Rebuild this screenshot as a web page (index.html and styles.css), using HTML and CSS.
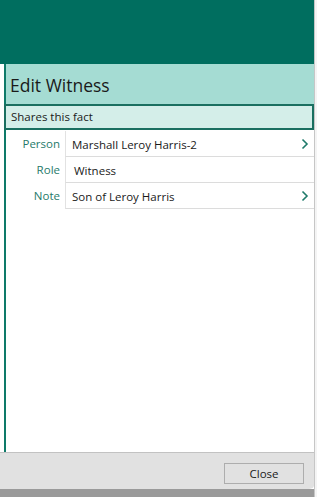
FILE: index.html
```html
<!DOCTYPE html>
<html lang="en">
<head>
    <meta charset="UTF-8">
    <meta name="viewport" content="width=device-width, initial-scale=1.0">
    <title>Edit Witness</title>
    <link rel="stylesheet" href="styles.css">
</head>
<body>
    <div class="screen">
        <div class="window">
            <div class="topbar"></div>

            <div class="dialog">
                <div class="dialog-title">Edit Witness</div>
                <div class="section">Shares this fact</div>

                <div class="fields">
                    <div class="field">
                        <div class="label">Person</div>
                        <div class="value">
                            <span>Marshall Leroy Harris-2</span>
                            <svg class="chevron" viewBox="0 0 8 12" width="8" height="12">
                                <path d="M1.5 1.5 L6 6 L1.5 10.5" fill="none" stroke="#1f7a6a" stroke-width="1.6"/>
                            </svg>
                        </div>
                    </div>
                    <div class="field">
                        <div class="label">Role</div>
                        <div class="value plain">
                            <span>Witness</span>
                        </div>
                    </div>
                    <div class="field">
                        <div class="label">Note</div>
                        <div class="value">
                            <span>Son of Leroy Harris</span>
                            <svg class="chevron" viewBox="0 0 8 12" width="8" height="12">
                                <path d="M1.5 1.5 L6 6 L1.5 10.5" fill="none" stroke="#1f7a6a" stroke-width="1.6"/>
                            </svg>
                        </div>
                    </div>
                </div>
            </div>

            <div class="footer">
                <button class="btn">Close</button>
            </div>
        </div>
        <div class="edge"></div>
    </div>
</body>
</html>
```

FILE: styles.css
```css
* {
    margin: 0;
    padding: 0;
    box-sizing: border-box;
}

body {
    font-family: "Open Sans", "Noto Sans", Arial, sans-serif;
    background-color: #ffffff;
    color: #1a1a1a;
    width: 317px;
    height: 497px;
    overflow: hidden;
}

.screen {
    display: flex;
    height: 497px;
    background: linear-gradient(to bottom, #ffffff 0, #ffffff 489px, #9a9a9a 489px);
}

.window {
    width: 314px;
    display: flex;
    flex-direction: column;
}

.edge {
    width: 3px;
    border-left: 1px solid #c6c6c6;
    background-color: #f4f4f4;
}

.topbar {
    height: 64px;
    background-color: #006e5f;
}

.dialog {
    height: 388px;
    margin-left: 4px;
    border-left: 2px solid #0e7a69;
    background-color: #fff;
}

.dialog-title {
    height: 40px;
    padding: 9px 0 0 4px;
    background-color: #a5dcd3;
    font-size: 17.5px;
    color: #1a1a1a;
}

.section {
    height: 26px;
    margin-left: -2px;
    padding: 3px 0 0 5px;
    border: 2px solid #1a6f60;
    background-color: #d4eee9;
    font-size: 11.5px;
}

.fields {
    padding-top: 1px;
}

.field {
    display: flex;
    height: 26px;
}

.label {
    width: 59px;
    padding: 5px 5px 0 0;
    text-align: right;
    font-size: 11.5px;
    color: #1f7a6a;
}

.value {
    flex: 1;
    display: flex;
    justify-content: space-between;
    align-items: center;
    padding: 1px 5px 0 6px;
    border-left: 1px solid #e2e2e2;
    border-bottom: 1px solid #dcdcdc;
    font-size: 11.5px;
}

.value.plain {
    padding-left: 8px;
}

.footer {
    height: 37px;
    margin-right: -1px;
    display: flex;
    justify-content: flex-end;
    align-items: flex-start;
    padding: 10px 11px 0 0;
    background-color: #e1e1e1;
    border-top: 1px solid #c2c2c2;
    border-bottom-right-radius: 6px;
}

.btn {
    width: 80px;
    height: 21px;
    background-color: #e1e1e1;
    border: 1px solid #adadad;
    font-family: "Open Sans", "Noto Sans", Arial, sans-serif;
    font-size: 11.5px;
    color: #1a1a1a;
}
```
